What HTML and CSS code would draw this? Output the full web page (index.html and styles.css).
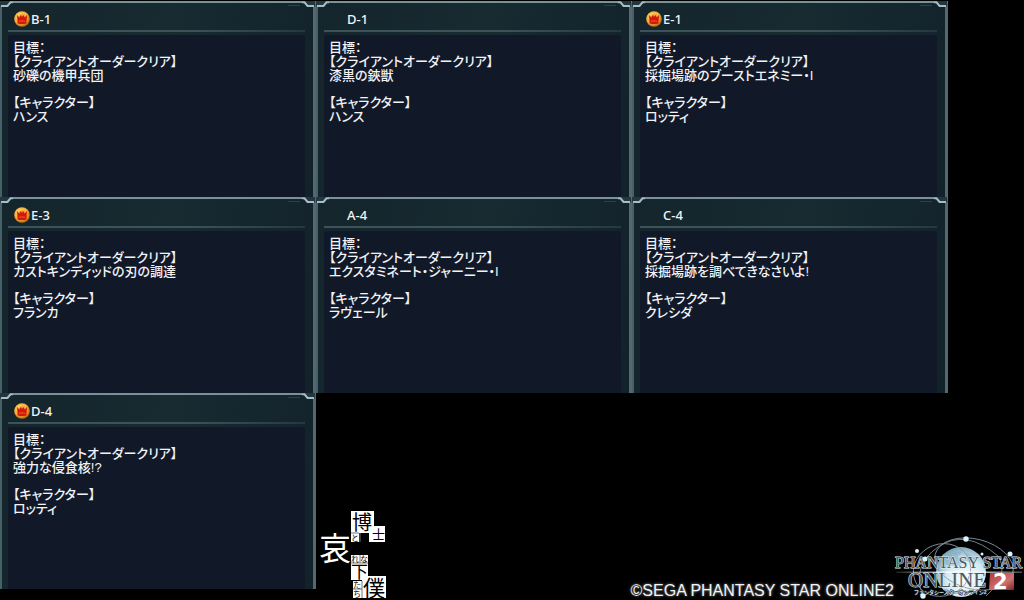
FILE: index.html
```html
<!DOCTYPE html>
<html lang="ja">

<head>
    <meta charset="UTF-8">
    <meta name="viewport" content="width=device-width, initial-scale=1.0">
    <title>PSO2 ビンゴ</title>
    <link rel="stylesheet" href="styles.css">
</head>

<body>
    <svg class="defs" width="0" height="0" aria-hidden="true">
        <defs>
            <radialGradient id="coin" cx="40%" cy="35%" r="65%">
                <stop offset="0" stop-color="#ffe27a" />
                <stop offset="0.6" stop-color="#f9ae35" />
                <stop offset="1" stop-color="#c26c16" />
            </radialGradient>
            <symbol id="crown" viewBox="0 0 16 16">
                <circle cx="8" cy="8" r="7.8" fill="url(#coin)" />
                <path d="M3 4L5.4 6.500L6 3.500L7.300 5.800L8 2.500L8.700 5.800L10 3.500L10.600 6.500L13 4L12.300 12.500Q8 13.500 3.700 12.500z" fill="#d3170c" />
                <path d="M5 10.300Q8 9.500 11 10.300" fill="none" stroke="#f0761c" stroke-width=".8" />
            </symbol>
            <symbol id="corner" viewBox="0 0 13 7">
                <path d="M0 0h13v1.500H10.500L7.500 5.500H0z" fill="#24363f" />
                <path d="M13 1.300H10.500L7.500 5H1" fill="none" stroke="#a4bdc7" stroke-width="2" />
            </symbol>
        </defs>
    </svg>

    <main class="board">
        <article class="panel">
            <svg class="corner"><use href="#corner" /></svg>
            <svg class="corner corner-right"><use href="#corner" /></svg>
            <h2><svg class="crown"><use href="#crown" /></svg>B-1</h2>
            <div class="order">
                <p>目標：</p>
                <p>【クライアントオーダークリア】</p>
                <p>砂礫の機甲兵団</p>
                <p class="who">【キャラクター】</p>
                <p>ハンス</p>
            </div>
        </article>
        <article class="panel">
            <svg class="corner"><use href="#corner" /></svg>
            <svg class="corner corner-right"><use href="#corner" /></svg>
            <h2><span class="crown"></span>D-1</h2>
            <div class="order">
                <p>目標：</p>
                <p>【クライアントオーダークリア】</p>
                <p>漆黒の鋏獣</p>
                <p class="who">【キャラクター】</p>
                <p>ハンス</p>
            </div>
        </article>
        <article class="panel">
            <svg class="corner"><use href="#corner" /></svg>
            <svg class="corner corner-right"><use href="#corner" /></svg>
            <h2><svg class="crown"><use href="#crown" /></svg>E-1</h2>
            <div class="order">
                <p>目標：</p>
                <p>【クライアントオーダークリア】</p>
                <p>採掘場跡のブーストエネミー・I</p>
                <p class="who">【キャラクター】</p>
                <p>ロッティ</p>
            </div>
        </article>
        <article class="panel first">
            <svg class="corner"><use href="#corner" /></svg>
            <svg class="corner corner-right"><use href="#corner" /></svg>
            <h2><svg class="crown"><use href="#crown" /></svg>E-3</h2>
            <div class="order">
                <p>目標：</p>
                <p>【クライアントオーダークリア】</p>
                <p>カストキンディッドの刃の調達</p>
                <p class="who">【キャラクター】</p>
                <p>フランカ</p>
            </div>
        </article>
        <article class="panel">
            <svg class="corner"><use href="#corner" /></svg>
            <svg class="corner corner-right"><use href="#corner" /></svg>
            <h2><span class="crown"></span>A-4</h2>
            <div class="order">
                <p>目標：</p>
                <p>【クライアントオーダークリア】</p>
                <p>エクスタミネート・ジャーニー・I</p>
                <p class="who">【キャラクター】</p>
                <p>ラヴェール</p>
            </div>
        </article>
        <article class="panel">
            <svg class="corner"><use href="#corner" /></svg>
            <svg class="corner corner-right"><use href="#corner" /></svg>
            <h2><span class="crown"></span>C-4</h2>
            <div class="order">
                <p>目標：</p>
                <p>【クライアントオーダークリア】</p>
                <p>採掘場跡を調べてきなさいよ!</p>
                <p class="who">【キャラクター】</p>
                <p>クレシダ</p>
            </div>
        </article>
        <article class="panel first">
            <svg class="corner"><use href="#corner" /></svg>
            <svg class="corner corner-right"><use href="#corner" /></svg>
            <h2><svg class="crown"><use href="#crown" /></svg>D-4</h2>
            <div class="order">
                <p>目標：</p>
                <p>【クライアントオーダークリア】</p>
                <p>強力な侵食核!?</p>
                <p class="who">【キャラクター】</p>
                <p>ロッティ</p>
            </div>
        </article>

        <footer class="credits">
            <svg class="blog-logo" viewBox="0 0 72 90" role="img" aria-label="博士と哀れな下僕たち">
                <path d="M31 1h23v15h11v16H49V23H39v9h-8zM31 45h17v25H31zM33 71h9v17h-9zM42 66h24v22H42z" fill="#fff" />
                <path d="M40 23v9M31 23h8M40 45v8M31 53h17M33 79h9M42 71v17" stroke="#777" stroke-width="1" />
                <g class="blog-text">
                    <text x="-1" y="50" font-size="32" fill="#fff">哀</text>
                    <text x="32" y="20" font-size="20">博</text>
                    <text x="52" y="29" font-size="13">士</text>
                    <text x="31" y="31" font-size="8">と</text>
                    <text x="31" y="52" font-size="8">れ</text>
                    <text x="40" y="52" font-size="8">な</text>
                    <text x="31" y="68" font-size="17">下</text>
                    <text x="33" y="78" font-size="8">た</text>
                    <text x="33" y="87" font-size="8">ち</text>
                    <text x="43" y="86" font-size="22">僕</text>
                </g>
            </svg>
            <p class="copyright">©SEGA PHANTASY STAR ONLINE2</p>
            <svg class="game-logo" viewBox="0 0 130 70" role="img" aria-label="PHANTASY STAR ONLINE2">
                <defs>
                    <radialGradient id="planet" cx="60%" cy="65%" r="65%">
                        <stop offset="0" stop-color="#ffffff" />
                        <stop offset="0.6" stop-color="#d3ebf3" />
                        <stop offset="1" stop-color="#7fa9bf" />
                    </radialGradient>
                    <linearGradient id="horizon">
                        <stop offset="0" stop-color="#fff" stop-opacity=".1" />
                        <stop offset="0.5" stop-color="#fff" />
                        <stop offset="1" stop-color="#fff" stop-opacity=".3" />
                    </linearGradient>
                    <linearGradient id="two" x1="0" y1="0" x2="1" y2="1">
                        <stop offset="0" stop-color="#b0393a" />
                        <stop offset="0.6" stop-color="#cf7471" />
                        <stop offset="1" stop-color="#7d2526" />
                    </linearGradient>
                </defs>
                <circle cx="67" cy="42" r="25" fill="url(#planet)" />
                <path d="M50 29q8-9 18-7l-5 5 9 3-8 6-12-1zM73 23l9 5-4 5-8-3z" fill="#7fa9bf" opacity=".5" />
                <g fill="none" stroke="#8b9ba6" stroke-width=".8">
                    <ellipse cx="48" cy="40" rx="29" ry="26" transform="rotate(-20 48 40)" />
                    <ellipse cx="80" cy="34" rx="40" ry="25" transform="rotate(14 80 34)" />
                    <path d="M29 66Q17 36 44 17T104 26Q116 44 92 66" />
                </g>
                <path d="M2 41.500h126v1.500H2z" fill="url(#horizon)" />
                <g class="game-text">
                    <text x="1" y="38" font-size="16">PHANTASY STAR</text>
                    <text x="14" y="57" font-size="21">ONLINE</text>
                </g>
                <path d="M96 43h24v17H95z" fill="url(#two)" />
                <text class="game-two" x="99" y="59" font-size="21">2</text>
                <text class="game-ruby" x="20" y="64" font-size="5">ファンタシースターオンライン2</text>
                <g fill="#d9f5ff">
                    <circle cx="72" cy="9" r="2.700" />
                    <circle cx="23" cy="21" r="2" />
                    <circle cx="31" cy="29" r="2.500" />
                    <circle cx="116" cy="24" r="2.500" />
                    <circle cx="88" cy="24" r="1.500" />
                    <circle cx="29" cy="66" r="2.700" />
                </g>
            </svg>
        </footer>
    </main>
</body>

</html>
```

FILE: styles.css
```css
* {
    box-sizing: border-box;
}

body {
    font-family: "Liberation Sans", "Noto Sans CJK JP", sans-serif;
    margin: 0;
    background-color: #000;
    color: #f1f3f6;
}

.defs {
    position: absolute;
}

.board {
    display: grid;
    grid-template-columns: repeat(3, minmax(0, 316px)) 1fr;
    grid-template-rows: auto auto 1fr;
    align-items: start;
    min-height: 100vh;
    padding-top: 1px;
}

.first {
    grid-column-start: 1;
}

.panel {
    position: relative;
    display: flex;
    flex-direction: column;
    min-height: 196px;
    padding: 0 8px 0 6px;
    border-top: 2px solid #78929b;
    border-left: 2px solid #466169;
    border-right: 3px solid #56686d;
    background: linear-gradient(100deg, #14252c, #182b31 50%, #12222b);
    background-clip: padding-box;
}

.panel::after {
    content: "";
    position: absolute;
    top: 2px;
    right: 13px;
    width: 12px;
    height: 1px;
    background-color: #2c4148;
}

.corner {
    position: absolute;
    top: -2px;
    left: -2px;
    width: 13px;
    height: 7px;
}

.corner-right {
    left: auto;
    right: -2px;
    transform: scaleX(-1);
}

h2 {
    display: flex;
    align-items: center;
    height: 29px;
    margin: 0 0 3px;
    padding: 5px 0 0 6px;
    border-bottom: 2px solid;
    border-image: linear-gradient(to right, #3d535a 60%, #24383f) 1;
    font-family: "Noto Sans", "Noto Sans CJK JP", sans-serif;
    font-size: 13px;
    font-weight: 500;
    line-height: 16px;
}

.crown {
    width: 16px;
    height: 16px;
    margin-right: 1px;
}

.order {
    flex: 1;
    padding: 6px 5px;
    border-radius: 3px 3px 0 0;
    background-color: #111929;
    font-size: 13px;
    font-weight: 500;
    line-height: 14px;
    font-feature-settings: "palt";
}

.order p {
    margin: 0;
    white-space: nowrap;
}

.order .who {
    margin-top: 13px;
}

.credits {
    grid-column: 2 / -1;
    align-self: end;
    display: flex;
    align-items: flex-end;
    padding-left: 4px;
}

.blog-logo {
    width: 72px;
    height: 90px;
}

.blog-text {
    font-family: "Liberation Serif", "Noto Sans CJK JP", serif;
    fill: #000;
}

.copyright {
    margin: 0 0 0 auto;
    font-size: 16px;
    line-height: 18px;
    text-shadow: 0 0 3px #999;
}

.game-logo {
    width: 130px;
    height: 70px;
}

.game-text {
    font-family: "Liberation Serif", serif;
    fill: #4a5962;
    stroke: #e4edf1;
    stroke-width: 1px;
    paint-order: stroke;
}

.game-two {
    font-family: "DejaVu Sans", sans-serif;
    font-weight: bold;
    fill: #fff;
}

.game-ruby {
    font-weight: 700;
    fill: #ccd9e0;
    stroke: #20313c;
    stroke-width: 1px;
    paint-order: stroke;
}
```
